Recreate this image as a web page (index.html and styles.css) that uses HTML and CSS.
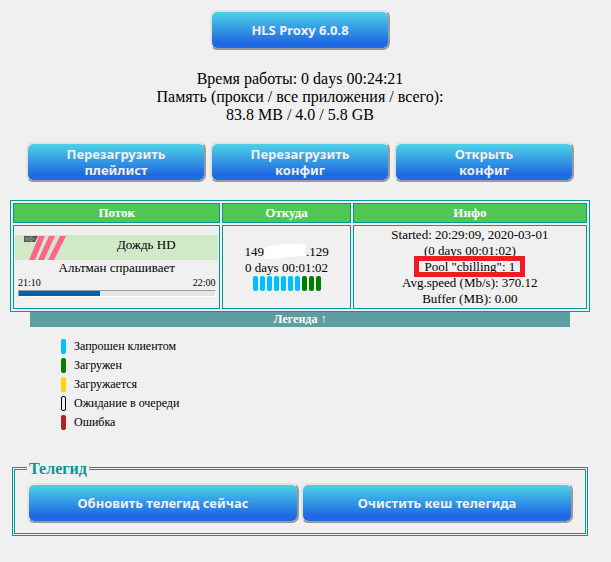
FILE: index.html
```
<!DOCTYPE html>
<html lang="ru">
  <head>
    <meta charset="UTF-8" />
    <title>HLS Proxy</title>
    <link rel="stylesheet" href="styles.css">
  </head>
  <body>
    <div class="buttons">
      <button class="btn" type="button">HLS Proxy 6.0.8</button>
    </div>

    <div class="stats">
      Время работы: 0 days 00:24:21<br />
      Память (прокси / все приложения / всего):<br />
      83.8 MB / 4.0 / 5.8 GB
    </div>

    <div class="buttons">
      <button class="btn" type="button">Перезагрузить<br />плейлист</button>
      <button class="btn" type="button">Перезагрузить<br />конфиг</button>
      <button class="btn" type="button">Открыть<br />конфиг</button>
    </div>

    <table class="streams">
      <thead>
        <tr>
          <th class="col-stream">Поток</th>
          <th class="col-from">Откуда</th>
          <th>Инфо</th>
        </tr>
      </thead>
      <tbody>
        <tr>
          <td>
            <div class="channel">
              <svg class="logo" width="42" height="25" viewBox="0 0 42 25">
                <path d="M0 1h14l-3 6H0z" fill="#555" />
                <path d="M2 2v4M4 2v4M2 4h2M6 2v4M6 2h2v4H6M10 3v2" stroke="#999" fill="none" />
                <path d="M15 1h6L11 25H5zM25 1h6L20 25h-6zM36 1h6L30 25h-6z" fill="#ff6490" />
              </svg>
              <span class="channel-name">Дождь HD</span>
            </div>
            <div class="show">Альтман спрашивает</div>
            <div class="times"><span>21:10</span><span>22:00</span></div>
            <div class="progress"><div class="progress-bar" style="width: 41%"></div></div>
          </td>
          <td>
            <div class="address">
              <span>149</span>
              <svg width="42" height="16" viewBox="0 0 42 16">
                <path d="M0 5l5-3 12-2h20l4 1v11l-18 1-12 2H0z" fill="#fff" />
              </svg>
              <span>.129</span>
            </div>
            <div>0 days 00:01:02</div>
            <div class="chunks">
              <i class="chunk requested"></i>
              <i class="chunk requested"></i>
              <i class="chunk requested"></i>
              <i class="chunk requested"></i>
              <i class="chunk requested"></i>
              <i class="chunk requested"></i>
              <i class="chunk requested"></i>
              <i class="chunk loaded"></i>
              <i class="chunk loaded"></i>
              <i class="chunk loaded"></i>
            </div>
          </td>
          <td>
            <div>Started: 20:29:09, 2020-03-01</div>
            <div>(0 days 00:01:02)</div>
            <div><span class="pool">Pool "cbilling": 1</span></div>
            <div>Avg.speed (Mb/s): 370.12</div>
            <div>Buffer (MB): 0.00</div>
          </td>
        </tr>
      </tbody>
    </table>

    <button class="legend-toggle" type="button">Легенда ↑</button>
    <ul class="legend-list">
      <li><i class="chunk requested"></i>Запрошен клиентом</li>
      <li><i class="chunk loaded"></i>Загружен</li>
      <li><i class="chunk loading"></i>Загружается</li>
      <li><i class="chunk queued"></i>Ожидание в очереди</li>
      <li><i class="chunk failed"></i>Ошибка</li>
    </ul>

    <fieldset class="guide">
      <legend>Телегид</legend>
      <div class="guide-buttons">
        <button class="btn" type="button">Обновить телегид сейчас</button>
        <button class="btn" type="button">Очистить кеш телегида</button>
      </div>
    </fieldset>
  </body>
</html>
```
FILE: styles.css
```
* {
  box-sizing: border-box;
}

body {
  margin: 0;
  padding: 10px 21px 10px 10px;
  background-color: #f0f0f0;
  color: #000;
  font-family: "Liberation Serif", "Times New Roman", serif;
  font-size: 16px;
}

.buttons {
  display: flex;
  justify-content: center;
  gap: 4px;
}

.btn {
  width: 180px;
  height: 40px;
  padding: 0;
  border: 2px solid;
  border-color: #e2e2e2 #999 #999 #e2e2e2;
  border-radius: 7px;
  background: linear-gradient(#4dd2e8, #1f6ae2 85%) padding-box;
  color: #f0f0f0;
  font: bold 13px/16px "Noto Sans", Tahoma, sans-serif;
  cursor: pointer;
}

.stats {
  margin: 20px 0 18px;
  text-align: center;
  line-height: 18px;
}

.streams {
  width: 100%;
  margin-top: 18px;
  table-layout: fixed;
  border: 1px solid #099;
  border-collapse: separate;
  border-spacing: 2px;
  text-align: center;
  font-size: 13px;
  line-height: 16px;
}

.streams th,
.streams td {
  border: 1px solid #099;
  padding: 1px;
}

.streams th {
  background-color: #50c754;
  color: white;
}

.col-stream {
  width: 36.4%;
}

.col-from {
  width: 22.5%;
}

.channel {
  display: flex;
  height: 25px;
  background-color: #d0eac7;
}

.logo {
  margin-left: 9px;
}

.channel-name {
  flex: 1;
  padding-left: 8px;
  line-height: 20px;
}

.times {
  display: flex;
  justify-content: space-between;
  margin: 0 3px;
  font-size: 10px;
  line-height: 14px;
}

.progress {
  height: 7px;
  margin: 0 2px 2px 3px;
  border: 1px solid;
  border-color: #999 #fff #fff #999;
  background-color: #e5e5e5;
}

.progress-bar {
  height: 100%;
  background-color: #0063b1;
}

.address {
  display: flex;
  justify-content: center;
}

.chunks {
  display: flex;
  justify-content: center;
  gap: 2px;
}

.chunk {
  width: 5px;
  height: 15px;
  border-radius: 2px;
}

.requested {
  background-color: deepskyblue;
}

.loaded {
  background-color: green;
}

.loading {
  background-color: gold;
}

.queued {
  border: 1px solid black;
}

.failed {
  background-color: firebrick;
}

.pool {
  position: relative;
}

.pool::after {
  content: "";
  position: absolute;
  inset: -3px -10px;
  border: 5px solid #ed1c24;
}

.legend-toggle {
  display: block;
  width: calc(100% - 40px);
  margin: 0 20px;
  padding: 0;
  border: none;
  background-color: cadetblue;
  color: white;
  font: bold 12px/15px "Liberation Serif", "Times New Roman", serif;
}

.legend-list {
  display: grid;
  gap: 4px;
  margin: 12px 0 30px;
  padding: 0 0 0 51px;
  list-style: none;
  font-size: 12px;
  line-height: 15px;
}

.legend-list li {
  display: flex;
  gap: 8px;
}

.guide {
  margin: 0 2px;
  padding: 6px 12px 10px;
  border: 3px double #099;
}

.guide legend {
  padding: 0 2px;
  color: #099;
  font-size: 16px;
  font-weight: bold;
  line-height: 17px;
}

.guide-buttons {
  display: flex;
  gap: 2px;
}

.guide-buttons .btn {
  flex: 1;
}
```
